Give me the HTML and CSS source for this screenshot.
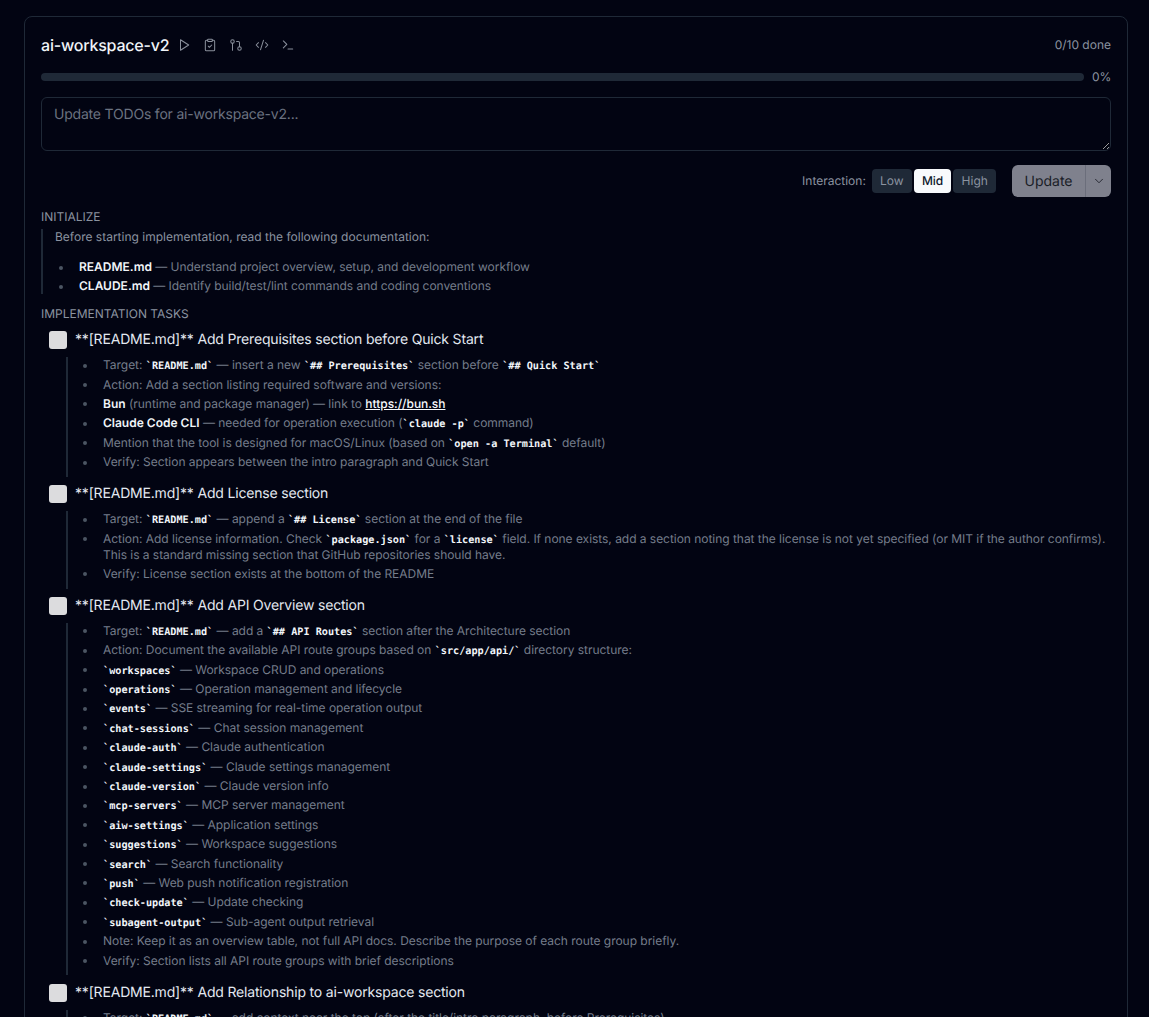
FILE: index.html
```html
<!DOCTYPE html>
<html lang="en">
<head>
<meta charset="utf-8">
<title>ai-workspace-v2</title>
<link rel="stylesheet" href="styles.css">
</head>
<body>
<main class="page">
<section class="card">
  <header class="head">
    <div class="head-left">
      <h1 class="title">ai-workspace-v2</h1>
      <div class="tools">
        <svg class="icon" viewBox="0 0 24 24"><path d="M6 3l14 9-14 9z"/></svg>
        <svg class="icon" viewBox="0 0 24 24"><rect x="8" y="2" width="8" height="4" rx="1"/><path d="M16 4h2a2 2 0 0 1 2 2v14a2 2 0 0 1-2 2H6a2 2 0 0 1-2-2V6a2 2 0 0 1 2-2h2"/><path d="M9 14l2 2 4-4"/></svg>
        <svg class="icon" viewBox="0 0 24 24"><circle cx="6" cy="6" r="3"/><path d="M6 9v12"/><circle cx="18" cy="18" r="3"/><path d="M13 6h3a2 2 0 0 1 2 2v7"/></svg>
        <svg class="icon" viewBox="0 0 24 24"><path d="M18 16l4-4-4-4"/><path d="M6 8l-4 4 4 4"/><path d="M14.5 4l-5 16"/></svg>
        <svg class="icon" viewBox="0 0 24 24"><path d="M4 17l6-6-6-6"/><path d="M12 19h8"/></svg>
      </div>
    </div>
    <span class="done">0/10 done</span>
  </header>
  <div class="progress-row">
    <div class="track"></div>
    <span class="pct">0%</span>
  </div>
  <textarea class="input" placeholder="Update TODOs for ai-workspace-v2..."></textarea>
  <div class="controls">
    <span class="label">Interaction:</span>
    <div class="levels">
      <span class="level">Low</span>
      <span class="level active">Mid</span>
      <span class="level">High</span>
    </div>
    <div class="split">
      <span class="split-main">Update</span>
      <span class="split-arrow"><svg class="chev" viewBox="0 0 24 24"><path d="M6 9l6 6 6-6"/></svg></span>
    </div>
  </div>

  <h2 class="section">INITIALIZE</h2>
  <div class="intro">
    <p class="intro-text">Before starting implementation, read the following documentation:</p>
    <ul class="list">
      <li><strong>README.md</strong> — Understand project overview, setup, and development workflow</li>
      <li><strong>CLAUDE.md</strong> — Identify build/test/lint commands and coding conventions</li>
    </ul>
  </div>

  <h2 class="section tasks-head">IMPLEMENTATION TASKS</h2>

  <div class="task">
    <div class="task-head"><span class="box"></span><span class="task-title">**[README.md]** Add Prerequisites section before Quick Start</span></div>
    <ul class="list sub">
      <li>Target: <code>`README.md`</code> — insert a new <code>`## Prerequisites`</code> section before <code>`## Quick Start`</code></li>
      <li>Action: Add a section listing required software and versions:</li>
      <li><strong>Bun</strong> (runtime and package manager) — link to <a class="link">https://bun.sh</a></li>
      <li><strong>Claude Code CLI</strong> — needed for operation execution (<code>`claude -p`</code> command)</li>
      <li>Mention that the tool is designed for macOS/Linux (based on <code>`open -a Terminal`</code> default)</li>
      <li>Verify: Section appears between the intro paragraph and Quick Start</li>
    </ul>
  </div>

  <div class="task">
    <div class="task-head"><span class="box"></span><span class="task-title">**[README.md]** Add License section</span></div>
    <ul class="list sub">
      <li>Target: <code>`README.md`</code> — append a <code>`## License`</code> section at the end of the file</li>
      <li>Action: Add license information. Check <code>`package.json`</code> for a <code>`license`</code> field. If none exists, add a section noting that the license is not yet specified (or MIT if the author confirms). This is a standard missing section that GitHub repositories should have.</li>
      <li>Verify: License section exists at the bottom of the README</li>
    </ul>
  </div>

  <div class="task">
    <div class="task-head"><span class="box"></span><span class="task-title">**[README.md]** Add API Overview section</span></div>
    <ul class="list sub">
      <li>Target: <code>`README.md`</code> — add a <code>`## API Routes`</code> section after the Architecture section</li>
      <li>Action: Document the available API route groups based on <code>`src/app/api/`</code> directory structure:</li>
      <li><code>`workspaces`</code> — Workspace CRUD and operations</li>
      <li><code>`operations`</code> — Operation management and lifecycle</li>
      <li><code>`events`</code> — SSE streaming for real-time operation output</li>
      <li><code>`chat-sessions`</code> — Chat session management</li>
      <li><code>`claude-auth`</code> — Claude authentication</li>
      <li><code>`claude-settings`</code> — Claude settings management</li>
      <li><code>`claude-version`</code> — Claude version info</li>
      <li><code>`mcp-servers`</code> — MCP server management</li>
      <li><code>`aiw-settings`</code> — Application settings</li>
      <li><code>`suggestions`</code> — Workspace suggestions</li>
      <li><code>`search`</code> — Search functionality</li>
      <li><code>`push`</code> — Web push notification registration</li>
      <li><code>`check-update`</code> — Update checking</li>
      <li><code>`subagent-output`</code> — Sub-agent output retrieval</li>
      <li>Note: Keep it as an overview table, not full API docs. Describe the purpose of each route group briefly.</li>
      <li>Verify: Section lists all API route groups with brief descriptions</li>
    </ul>
  </div>

  <div class="task">
    <div class="task-head"><span class="box"></span><span class="task-title">**[README.md]** Add Relationship to ai-workspace section</span></div>
    <ul class="list sub">
      <li>Target: <code>`README.md`</code> — add context near the top (after the title/intro paragraph, before Prerequisites)</li>
    </ul>
  </div>
</section>
</main>
</body>
</html>
```
FILE: styles.css
```css
* { box-sizing: border-box; }
html, body { margin: 0; height: 100%; overflow: hidden; }
body {
  background: #020412;
  color: #8b93a0;
  font-family: Inter, "Noto Sans", sans-serif;
  font-size: 12px;
  line-height: 16px;
  text-rendering: geometricPrecision;
}
.page { padding: 16px 21px 0 24px; }
.card {
  border: 1px solid #1f2937;
  border-radius: 8px;
  padding: 16px;
  background: #020412;
}
.head { display: flex; justify-content: space-between; align-items: center; height: 24px; }
.head-left { display: flex; align-items: center; gap: 8px; }
.title { margin: 0; font-size: 16px; line-height: 24px; font-weight: 500; letter-spacing: -0.2px; color: #f1f5f9; }
.tools { display: flex; align-items: center; gap: 12px; }
.icon { width: 14px; height: 14px; fill: none; stroke: #8a909c; stroke-width: 1.75; stroke-linecap: round; stroke-linejoin: round; display: block; }
.done { color: #8b93a0; font-size: 12px; }
.progress-row { display: flex; align-items: center; gap: 8px; margin-top: 12px; height: 16px; }
.track { flex: 1; height: 8px; border-radius: 4px; background: #1f2937; }
.pct { color: #8b93a0; width: 19px; text-align: right; }
.input {
  display: block; width: 100%; height: 54px; margin-top: 12px; padding: 7px 12px;
  background: transparent; border: 1px solid #1f2937; border-radius: 6px;
  color: #e2e8f0; font: 14px/20px Inter, sans-serif; letter-spacing: -0.2px; outline: none;
  text-rendering: geometricPrecision;
}
.input::placeholder { color: #6b7280; opacity: 1; }
.controls { display: flex; justify-content: flex-end; align-items: center; margin-top: 14px; height: 32px; }
.label { color: #8b93a0; margin-right: 6px; }
.levels { display: flex; gap: 2px; margin-right: 16px; }
.level { height: 24px; line-height: 24px; padding: 0 8.15px; border-radius: 4px; background: #1f2937; color: #8b93a0; }
.level.active { background: #f8fafc; color: #0f172a; font-weight: 500; }
.split { display: flex; height: 32px; width: 99px; border-radius: 6px; overflow: hidden; background: #7f818d; color: #1a1d27; font-size: 14px; font-weight: 400; }
.split-main { flex: 1; line-height: 33px; text-align: center; }
.split-arrow { width: 26px; display: flex; align-items: center; justify-content: center; border-left: 1px solid #6b6e7b; }
.chev { width: 14px; height: 14px; fill: none; stroke: #1a1d27; stroke-width: 1.5; stroke-linecap: round; stroke-linejoin: round; }
.section { margin: 12px 0 0; font-size: 12px; line-height: 16px; font-weight: 400; color: #8b93a0; }
.intro { margin-top: 4px; border-left: 2px solid #1f2937; padding-left: 12px; }
.intro-text { margin: 0 0 14px; }
.list { list-style: none; margin: 0; padding: 0; display: flex; flex-direction: column; gap: 3.4px; }
.list li { position: relative; padding-left: 24px; color: #757d8b; letter-spacing: -0.05px; }
.list li::before { content: ""; position: absolute; left: 4px; top: 6.5px; width: 4px; height: 4px; border-radius: 50%; background: #4b5563; }
.list strong { color: #f1f5f9; font-weight: 600; letter-spacing: 0; }
code { font-family: "DejaVu Sans Mono", "Liberation Mono", monospace; font-size: 10.2px; line-height: 1; font-weight: 700; letter-spacing: 0; color: #f1f5f9; }
.link { color: #f8fafc; text-decoration: underline; font-weight: 500; }
.tasks-head { margin-top: 12px; }
.task { margin-top: 7px; padding-left: 8px; }
.task + .task { margin-top: 6.5px; }
.task-head { display: flex; align-items: center; gap: 8px; height: 22px; }
.box { width: 18px; height: 18px; border-radius: 3px; background: #dcdcde; flex: none; }
.task-title { font-size: 14px; line-height: 20px; letter-spacing: -0.18px; color: #e2e8f0; }
.sub { margin: 5.8px 0 0 17px; border-left: 2px solid #1f2937; padding-left: 0; padding-bottom: 6.7px; }
.sub li { padding-left: 35px; letter-spacing: -0.035px; }
.sub li::before { left: 15px; }
```
